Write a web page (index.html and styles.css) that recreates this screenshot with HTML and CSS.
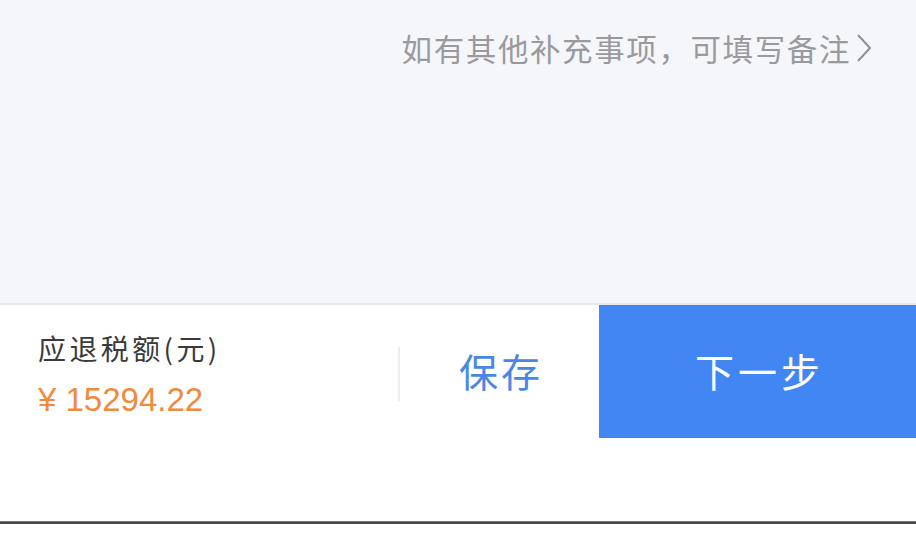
FILE: index.html
```html
<!DOCTYPE html>
<html lang="zh-CN">
<head>
<meta charset="utf-8">
<title>退税</title>
<link rel="stylesheet" href="styles.css">
</head>
<body>
<div class="page">
  <section class="remark">
    <a class="remark-link" href="#">
      <span class="remark-text">如有其他补充事项，可填写备注</span>
      <svg class="chev" width="18" height="30" viewBox="0 0 18 30" aria-hidden="true">
        <polyline points="3,2 15,15 3,28" fill="none" stroke="#8f8f94" stroke-width="2"/>
      </svg>
    </a>
  </section>
  <footer class="bar">
    <div class="refund">
      <div class="refund-label">应退税额(元)</div>
      <div class="refund-amount">¥ 15294.22</div>
    </div>
    <div class="divider"></div>
    <button class="btn-save">保存</button>
    <button class="btn-next">下一步</button>
  </footer>
  <div class="filler"></div>
  <div class="home-line"></div>
  <div class="tail"></div>
</div>
</body>
</html>
```
FILE: styles.css
```css
html, body {
  margin: 0;
  padding: 0;
  background: #ffffff;
}
body {
  font-family: "Noto Sans CJK SC", "Noto Sans", sans-serif;
  width: 916px;
  height: 536px;
  overflow: hidden;
}
.page {
  display: flex;
  flex-direction: column;
  height: 536px;
}
.remark {
  height: 305px;
  flex: none;
  background: #f5f6fa;
  border-bottom: 2px solid #e7e8ec;
  display: flex;
  justify-content: flex-end;
  align-items: flex-start;
  padding: 28px 43px 0 0;
  box-sizing: border-box;
}
.remark-link {
  display: flex;
  align-items: center;
  gap: 4px;
  text-decoration: none;
}
.remark-text {
  font-size: 30.5px;
  line-height: 40px;
  letter-spacing: 1.6px;
  color: #9a9a9e;
}
.chev {
  display: block;
}
.bar {
  height: 133px;
  flex: none;
  display: flex;
  align-items: stretch;
  background: #ffffff;
}
.refund {
  width: 360px;
  padding: 25px 0 0 38px;
  display: flex;
  flex-direction: column;
}
.refund-label {
  font-size: 28px;
  line-height: 36px;
  letter-spacing: 3.4px;
  color: #3a3a3c;
}
.refund-amount {
  font-family: "Liberation Sans", "Noto Sans CJK SC", sans-serif;
  font-size: 33px;
  line-height: 40px;
  color: #f08a3c;
  margin-top: 14px;
}
.divider {
  width: 2px;
  background: #ececec;
  margin: 42px 0 37px;
}
.btn-save {
  flex: 1;
  border: 0;
  background: #ffffff;
  font-family: "Noto Sans CJK SC", sans-serif;
  font-size: 39px;
  letter-spacing: 3px;
  text-indent: 3px;
  color: #4a86e6;
  padding: 0 0 4px;
}
.btn-next {
  width: 317px;
  flex: none;
  border: 0;
  background: #4286f4;
  font-family: "Noto Sans CJK SC", sans-serif;
  font-size: 39px;
  letter-spacing: 4px;
  text-indent: 4px;
  color: #ffffff;
  padding: 0 0 4px;
}
.filler {
  height: 83px;
  flex: none;
}
.home-line {
  height: 3px;
  flex: none;
  background: linear-gradient(#9a9a9a, #444 40%, #4a4a4a);
}
.tail {
  flex: 1;
  background: #ffffff;
}
```
